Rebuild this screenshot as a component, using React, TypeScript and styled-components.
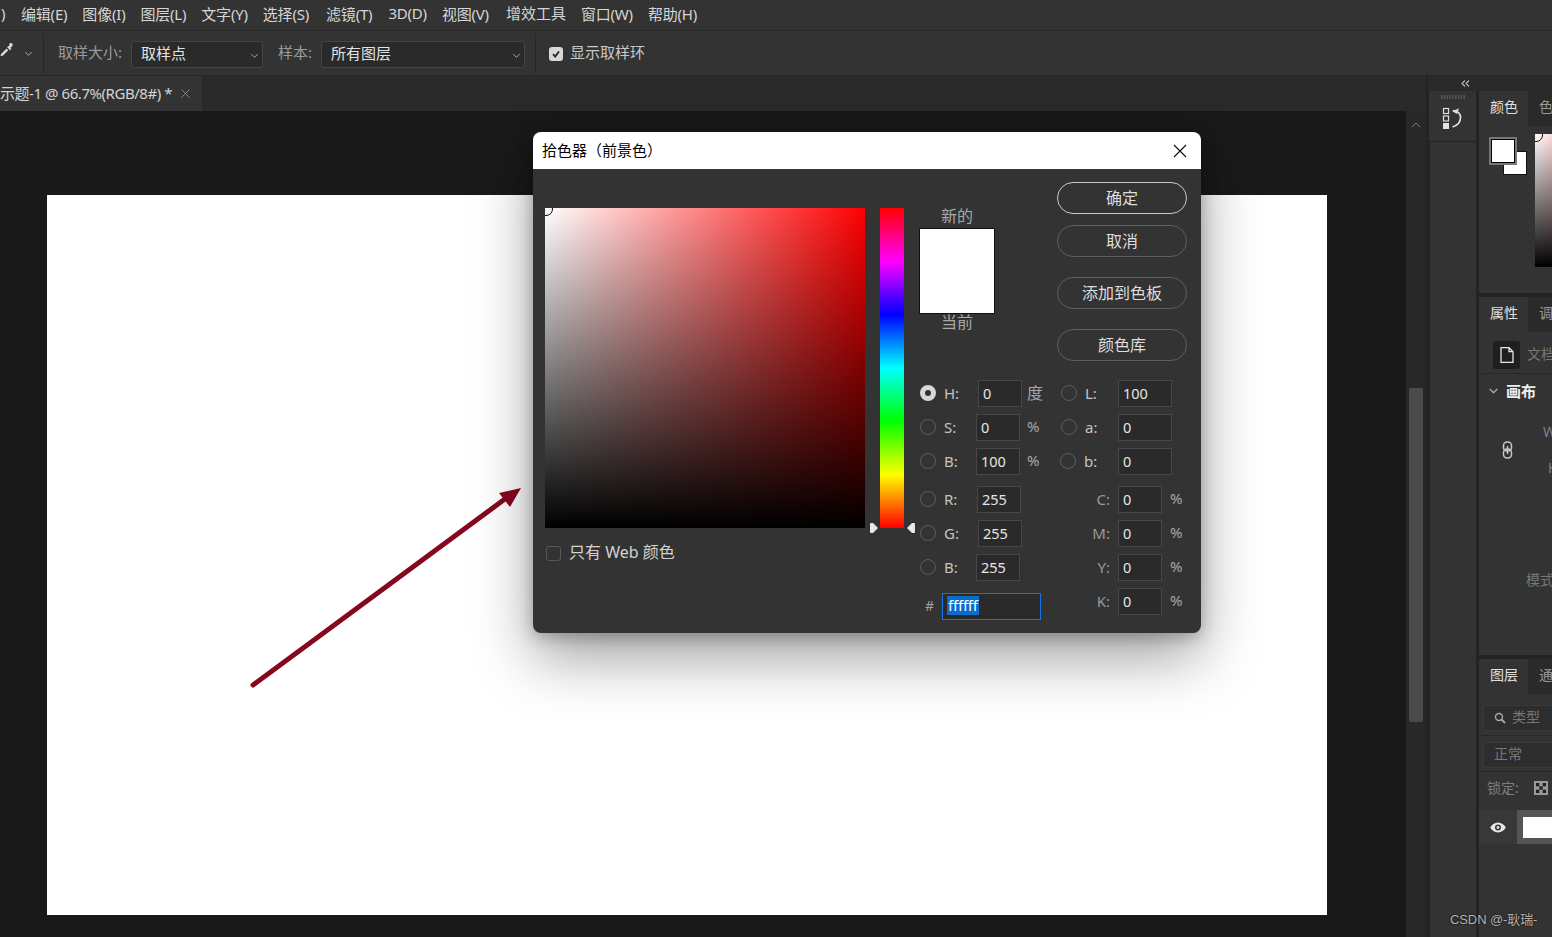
import React from "react";
import styled, { createGlobalStyle } from "styled-components";

const Global = createGlobalStyle`
  html, body { margin: 0; padding: 0; width: 1552px; height: 937px; overflow: hidden; background: #1a1a1a; }
  * { box-sizing: border-box; }
  body { font-family: "Noto Sans", "Noto Sans CJK SC", sans-serif; font-size: 14px; color: #d8d8d8; }
`;

const Page = styled.div`
  width: 1552px; height: 937px; display: flex; flex-direction: column; overflow: hidden; position: relative;
`;

/* Menu bar */
const MenuBar = styled.div`
  height: 31px; flex: none; display: flex; align-items: center; gap: 15px; background: #333;
  border-bottom: 1px solid #282828; white-space: nowrap; padding: 0 0 4px 1px; overflow: hidden;
`;
const MenuItem = styled.span<{ $big?: boolean; $extra?: number }>`
  font-size: 15px; color: #d6d6d6; letter-spacing: -0.2px; margin-left: ${p => p.$extra || 0}px;
  ${p => p.$big && "margin-top: -2px; letter-spacing: 0;"}
`;
const MenuLead = styled(MenuItem)`width: 5px;`;

/* Options bar */
const OptionsBar = styled.div`
  height: 45px; flex: none; display: flex; align-items: center; background: #333;
  border-bottom: 1px solid #282828; white-space: nowrap;
`;
const ToolSlot = styled.div`
  width: 44px; height: 41px; flex: none; display: flex; align-items: center; gap: 8px;
  border-right: 1px solid #282828; color: #ccc;
`;
const OptLabel = styled.span<{ $w: number; $x: number }>`
  width: ${p => p.$w}px; margin-left: ${p => p.$x}px; flex: none; color: #9a9a9a; font-size: 15px; margin-top: -3px;
`;
const SelectBox = styled.div<{ $w: number }>`
  width: ${p => p.$w}px; height: 27px; margin-top: 2px; flex: none; display: flex; align-items: center; justify-content: space-between;
  background: #2a2a2a; border: 1px solid #444; border-radius: 3px; padding: 0 3px 3px 9px; color: #e2e2e2; font-size: 15px;
`;
const ChevronSlot = styled.span`display: flex; margin-top: 5px;`;
const OptSep = styled.div`width: 1px; height: 41px; background: #282828; flex: none; margin-left: 10px;`;
const OptCheck = styled.div`
  width: 14px; height: 14px; flex: none; margin: 1px 7px 0 13px; background: #d8d8d8; border-radius: 3px;
  display: flex; align-items: center; justify-content: center;
`;
const OptText = styled.span`color: #c8c8c8; font-size: 15px; margin-top: -3px;`;

/* Main */
const Main = styled.div`flex: 1; display: flex; min-height: 0;`;
const DocArea = styled.div`width: 1428px; flex: none; display: flex; flex-direction: column; border-right: 2px solid #232323;`;
const TabRow = styled.div`height: 35px; flex: none; display: flex; background: #2a2a2a; overflow: hidden;`;
const DocTab = styled.div`
  width: 202px; display: flex; align-items: center; background: #333; white-space: nowrap; color: #d4d4d4;
  font-size: 15px; letter-spacing: -0.45px; padding-bottom: 2px; overflow: hidden;
`;
const TabClose = styled.span`margin-left: 9px; margin-top: 2px; display: flex; color: #8c8c8c;`;
const Workspace = styled.div`flex: 1; display: flex; min-height: 0;`;
const CanvasArea = styled.div`flex: 1; background: #191919; padding: 84px 0 0 47px;`;
const DocSheet = styled.div`width: 1280px; height: 720px; background: #fff; position: relative;`;
const ArrowLayer = styled.svg`position: absolute; left: 0; top: 0; width: 1280px; height: 720px;`;
const ScrollTrack = styled.div`width: 20px; flex: none; background: #282828; display: flex; flex-direction: column; align-items: center; padding-top: 11px;`;
const ScrollThumb = styled.div`width: 14px; height: 334px; margin-top: 260px; background: #4a4a4a; border-radius: 2px;`;

/* Dock */
const Dock = styled.div`flex: 1; display: flex; flex-direction: column; background: #232323; min-width: 0; overflow: hidden;`;
const DockTop = styled.div`height: 15px; flex: none; display: flex; justify-content: flex-end; align-items: center; padding-right: 82px; background: #2a2a2a;`;
const DockCols = styled.div`flex: 1; display: flex; gap: 3px; min-height: 0; padding-left: 1px;`;
const IconCol = styled.div`width: 47px; flex: none; display: flex; flex-direction: column; gap: 1px;`;
const IconPanel = styled.div`height: 50px; background: #333; display: flex; flex-direction: column; align-items: center; padding-top: 4px; gap: 8px;`;
const IconRest = styled.div`flex: 1; background: #333; margin-left: 1px;`;
const PanelCol = styled.div`flex: 1; display: flex; flex-direction: column; gap: 4px; min-width: 0; overflow: hidden;`;
const Panel = styled.div<{ $h?: number }>`
  ${p => (p.$h ? `height: ${p.$h}px; flex: none;` : "flex: 1;")} background: #333; overflow: hidden; white-space: nowrap;
`;
const PanelTabs = styled.div`height: 35px; display: flex; background: #2a2a2a;`;
const PanelTab = styled.div<{ $on?: boolean }>`
  width: ${p => (p.$on ? 49 : 40)}px; flex: none; padding: 0 0 5px 11px; display: flex; align-items: center;
  background: ${p => (p.$on ? "#333" : "#2a2a2a")}; color: ${p => (p.$on ? "#e0e0e0" : "#999")}; font-size: 14px;
`;

const ColorBody = styled.div`display: flex; padding: 8px 0 0 10px; gap: 7px;`;
const SwatchStack = styled.div`width: 39px; height: 42px; margin-top: 3px; position: relative; flex: none;`;
const FgSwatch = styled.div`
  position: absolute; left: 0; top: 0; width: 28px; height: 28px; background: #fff;
  border: 2px solid #777; box-shadow: inset 0 0 0 1px #000; z-index: 1;
`;
const BgSwatch = styled.div`position: absolute; left: 14px; top: 14px; width: 24px; height: 24px; background: #fff; border: 1px solid #111;`;
const MiniPicker = styled.div`
  width: 120px; height: 133px; flex: none; position: relative; overflow: hidden;
  background: linear-gradient(to bottom, transparent, #000), linear-gradient(to right, #fff, #f00);
`;
const PickerRing = styled.div`position: absolute; left: -6px; top: -6px; width: 14px; height: 14px; border-radius: 50%; border: 1px solid #000; box-shadow: inset 0 0 0 1px #fff;`;

const DocRow = styled.div`display: flex; align-items: center; gap: 7px; height: 42px; padding: 4px 0 0 14px; border-bottom: 1px solid #282828; color: #777;`;
const DocRowText = styled.span`margin-top: -3px;`;
const DocIconBox = styled.div`width: 27px; height: 28px; flex: none; background: #1f1f1f; border-radius: 3px; display: flex; align-items: center; justify-content: center;`;
const SectionHead = styled.div`display: flex; align-items: center; gap: 7px; padding: 6px 0 0 9px; font-weight: 700; color: #eee; font-size: 15px;`;
const SizeBlock = styled.div`display: flex; padding: 22px 0 0 23px; gap: 30px; height: 72px;`;
const ChainSlot = styled.div`padding-top: 18px;`;
const SizeLabels = styled.div`display: flex; flex-direction: column; gap: 18px; color: #7a8090; font-size: 14px;`;
const SizeLetter = styled.span<{ $in?: number }>`margin-left: ${p => p.$in || 0}px; line-height: 18px;`;
const ModeText = styled.div`padding: 96px 0 0 47px; color: #777;`;

const LayerBoxRow = styled.div<{ $top: number; $bottom: number }>`
  padding: ${p => p.$top}px 0 ${p => p.$bottom}px 4px; border-bottom: 1px solid #282828;
`;
const LayerBox = styled.div`
  height: 26px; width: 100px; display: flex; align-items: center; gap: 6px; background: #2d2d2d;
  border: 1px solid #3a3a3a; border-radius: 3px; padding: 0 0 5px 10px; color: #777;
`;
const LockRow = styled.div`display: flex; align-items: center; padding-left: 8px; height: 32px; color: #7e7e7e; gap: 15px;`;
const LockText = styled.span`margin-top: -2px;`;
const LayerRow = styled.div`display: flex; margin-top: 6px; height: 34px; background: #383838; padding-left: 11px; align-items: center; gap: 11px;`;
const LayerThumb = styled.div`height: 34px; width: 60px; flex: none; background: #555; padding: 7px 0 6px 6px;`;
const LayerWhite = styled.div`height: 100%; background: #fff;`;

/* Dialog */
const Dialog = styled.div`
  position: absolute; left: 533px; top: 132px; width: 668px; height: 501px; background: #333; border-radius: 8px;
  overflow: hidden; box-shadow: 0 24px 60px rgba(0,0,0,.38), 0 4px 16px rgba(0,0,0,.25); z-index: 5;
`;
const TitleBar = styled.div`
  height: 37px; background: #fff; color: #000; display: flex; align-items: center; justify-content: space-between;
  padding: 0 14px 2px 9px; font-size: 15px;
`;
const DialogBody = styled.div`display: flex; padding: 39px 14px 0 12px; gap: 15px;`;
const PickerCol = styled.div`width: 320px; flex: none;`;
const PickerField = styled.div`
  width: 320px; height: 320px; position: relative; overflow: hidden;
  background: linear-gradient(to bottom, transparent, #000), linear-gradient(to right, #fff, #f00);
`;
const WebRow = styled.label`display: flex; align-items: center; gap: 8px; margin-top: 11px; margin-left: 1px; color: #d2d2d2; font-size: 16px;`;
const WebBox = styled.span`width: 15px; height: 15px; margin-top: 4px; border: 1.5px solid #585858; border-radius: 3px; flex: none;`;
const HueCol = styled.div`width: 24px; height: 320px; flex: none; position: relative;`;
const HueBar = styled.div`
  width: 24px; height: 320px;
  background: linear-gradient(to bottom, #f00 0%, #f0f 16.67%, #00f 33.33%, #0ff 50%, #0f0 66.67%, #ff0 83.33%, #f00 100%);
`;
const HueMark = styled.svg<{ $side: "l" | "r" }>`
  position: absolute; top: 315px; ${p => (p.$side === "l" ? "left: -10px;" : "right: -11px;")} width: 8px; height: 10px;
`;
const RightCol = styled.div`flex: 1; margin-top: -26px; min-width: 0;`;
const TopBlock = styled.div`display: flex; height: 198px;`;
const SwatchCol = styled.div`width: 76px; flex: none; padding-top: 23px; display: flex; flex-direction: column; align-items: center; color: #a8a8a8; font-size: 16px; line-height: 22px;`;
const Preview = styled.div`width: 76px; height: 86px; flex: none; background: #fff; border: 1px solid #111; margin: 1px 0 -3px;`;
const ButtonCol = styled.div`margin-left: 62px; width: 130px; flex: none; display: flex; flex-direction: column;`;
const PillButton = styled.button<{ $primary?: boolean; $gap: number }>`
  width: 130px; height: 32px; margin-top: ${p => p.$gap}px; border-radius: 16px; background: transparent; padding: 0 0 2px;
  border: ${p => (p.$primary ? "1.5px solid #c8c8c8" : "1.5px solid #5e5e5e")}; color: #dedede; font: 16px "Noto Sans CJK SC", sans-serif;
`;
const FieldGrid = styled.div`display: flex;`;
const FieldCol = styled.div<{ $w: number; $x?: number }>`
  width: ${p => p.$w}px; margin-left: ${p => p.$x || 0}px; flex: none; display: flex; flex-direction: column;
`;
const FieldRow = styled.div<{ $top?: number; $x?: number }>`
  height: 27px; margin-top: ${p => p.$top ?? 7}px; margin-left: ${p => p.$x || 0}px; display: flex; align-items: center;
  color: #c4c4c4; font-size: 15px;
`;
const Radio = styled.span<{ $on?: boolean }>`
  width: 16px; height: 16px; flex: none; border-radius: 50%; margin-right: 8px; margin-top: -1px;
  border: ${p => (p.$on ? "5px solid #d8d8d8" : "1px solid #5c5c5c")}; background: #333;
`;
const FieldLabel = styled.span<{ $w: number; $right?: boolean }>`
  width: ${p => p.$w}px; flex: none; margin-top: -2px; ${p => p.$right && "text-align: right; padding-right: 8px; color: #999;"}
`;
const ValueBox = styled.div<{ $w?: number }>`
  width: ${p => p.$w ?? 44}px; height: 27px; flex: none; background: #2a2a2a; border: 1px solid #474747;
  display: flex; align-items: center; padding: 0 0 2px 4px; color: #e6e6e6; font-size: 14.5px;
`;
const Unit = styled.span<{ $x?: number; $big?: boolean }>`
  margin-left: ${p => p.$x ?? 7}px; margin-top: -3px; color: #a8a8a8; font-size: ${p => (p.$big ? 16 : 15)}px;
`;
const HashLabel = styled.span`width: 22px; flex: none; padding-left: 5px; color: #a0a0a0; font-size: 14px; margin-top: -2px;`;
const HexBox = styled(ValueBox)`width: 99px; border-color: #1473e6;`;
const HexSelected = styled.span`background: #0a6ccc; color: #fff; padding: 0 1px; line-height: 19px; font-size: 15px; letter-spacing: -0.2px;`;
const Watermark = styled.div`
  position: absolute; left: 1450px; top: 909px; color: #b4b4b4; font: 13px "Liberation Sans", "Noto Sans CJK SC", sans-serif; z-index: 6;
  letter-spacing: -0.1px; text-shadow: 0 0 2px #000;
`;

const Chevron = ({ c = "#aaa", s = 9 }: { c?: string; s?: number }) => (
  <svg width={s} height={s} viewBox="0 0 10 10"><path d="M1.5 3.5 5 7l3.5-3.5" fill="none" stroke={c} strokeWidth="1.1" /></svg>
);

const menuItems: { t: string; extra?: number; big?: boolean }[] = [
  { t: "编辑(E)" }, { t: "图像(I)" }, { t: "图层(L)" }, { t: "文字(Y)" }, { t: "选择(S)" },
  { t: "滤镜(T)", extra: 2 }, { t: "3D(D)", extra: 1 }, { t: "视图(V)" },
  { t: "增效工具", extra: 2, big: true }, { t: "窗口(W)" }, { t: "帮助(H)" },
];

type F = { l: string; v: string; w: number; top?: number; x?: number; on?: boolean; u?: string; ux?: number; bw?: number };
const leftFields: F[] = [
  { l: "H:", v: "0", w: 34, top: 0, on: true, u: "度", ux: 5 },
  { l: "S:", v: "0", w: 32, u: "%" },
  { l: "B:", v: "100", w: 32, u: "%", ux: 7 },
  { l: "R:", v: "255", w: 33, top: 11 },
  { l: "G:", v: "255", w: 34 },
  { l: "B:", v: "255", w: 32 },
];
const labFields: F[] = [
  { l: "L:", v: "100", w: 33, top: 0, x: 1, bw: 54 },
  { l: "a:", v: "0", w: 33, x: 1, bw: 54 },
  { l: "b:", v: "0", w: 34, bw: 54 },
];
const cmyk = [
  { l: "C:", top: 11 }, { l: "M:", top: 7 }, { l: "Y:", top: 7 }, { l: "K:", top: 7 },
];

export default function App() {
  return (
    <Page>
      <Global />
      <MenuBar>
        <MenuLead>)</MenuLead>
        {menuItems.map(m => <MenuItem key={m.t} $big={m.big} $extra={m.extra}>{m.t}</MenuItem>)}
      </MenuBar>
      <OptionsBar>
        <ToolSlot>
          <svg width="14" height="17" viewBox="0 0 14 17" style={{ marginTop: -6 }}>
            <path d="M9.5 1.5c1-1 2.6-.6 3 .5.4 1 .1 1.900-.6 2.600L10.500 6l.9.900-1.300 1.300-3-3 1.300-1.300.6.600zM6.500 6.500l1.800 1.800-5.500 5.500-2.300.5.500-2.300z" fill="#d8d8d8" />
          </svg>
          <span style={{ display: "flex", marginLeft: 2 }}><Chevron /></span>
        </ToolSlot>
        <OptLabel $w={73} $x={14}>取样大小:</OptLabel>
        <SelectBox $w={132}>取样点<ChevronSlot><Chevron /></ChevronSlot></SelectBox>
        <OptLabel $w={43} $x={15}>样本:</OptLabel>
        <SelectBox $w={204}>所有图层<ChevronSlot><Chevron /></ChevronSlot></SelectBox>
        <OptSep />
        <OptCheck>
          <svg width="10" height="10" viewBox="0 0 10 10"><path d="M2 5.200 4.200 7.500 8 2.500" fill="none" stroke="#222" strokeWidth="1.800" /></svg>
        </OptCheck>
        <OptText>显示取样环</OptText>
      </OptionsBar>
      <Main>
        <DocArea>
          <TabRow>
            <DocTab>
              示题-1 @ 66.7%(RGB/8#) *
              <TabClose>
                <svg width="9" height="9" viewBox="0 0 9 9"><path d="M.5.500l8 8M8.500.500l-8 8" stroke="currentColor" strokeWidth=".9" /></svg>
              </TabClose>
            </DocTab>
          </TabRow>
          <Workspace>
            <CanvasArea>
              <DocSheet>
                <ArrowLayer viewBox="0 0 1280 720">
                  <path d="M206 490 462 301" stroke="#85081f" strokeWidth="5" strokeLinecap="round" fill="none" />
                  <path d="M474 293 452 298 463 312z" fill="#85081f" />
                </ArrowLayer>
              </DocSheet>
            </CanvasArea>
            <ScrollTrack>
              <svg width="10" height="6" viewBox="0 0 10 6"><path d="M1 5l4-4 4 4" fill="none" stroke="#777" strokeWidth="1" /></svg>
              <ScrollThumb />
            </ScrollTrack>
          </Workspace>
        </DocArea>
        <Dock>
          <DockTop>
            <svg width="9" height="7" viewBox="0 0 9 7"><path d="M4 .5 1 3.500l3 3M8 .5 5 3.500l3 3" fill="none" stroke="#bbb" strokeWidth="1.100" /></svg>
          </DockTop>
          <DockCols>
            <IconCol>
              <IconPanel>
                <svg width="24" height="4" viewBox="0 0 24 4">
                  {Array.from({ length: 9 }).map((_, i) => <rect key={i} x={i * 2.8} width="1.500" height="4" fill="#555" />)}
                </svg>
                <svg width="21" height="23" viewBox="0 0 21 23">
                  <rect x="1.500" y="1.500" width="5" height="5" fill="none" stroke="#ddd" strokeWidth="1.200" />
                  <rect x="1.500" y="9" width="5" height="5" fill="none" stroke="#ddd" strokeWidth="1.200" />
                  <rect x="1" y="16" width="6" height="6" fill="#e4e4e4" />
                  <path d="M11 3.500c4.500.5 7.500 2.500 7.500 7 0 4.500-3 8-8 9.500" fill="none" stroke="#ddd" strokeWidth="1.700" />
                  <path d="M10 4 17 1.500l-2 5.500z" fill="#ddd" />
                </svg>
              </IconPanel>
              <IconRest />
            </IconCol>
            <PanelCol>
              <Panel $h={202}>
                <PanelTabs>
                  <PanelTab $on>颜色</PanelTab>
                  <PanelTab>色板</PanelTab>
                </PanelTabs>
                <ColorBody>
                  <SwatchStack>
                    <BgSwatch />
                    <FgSwatch />
                  </SwatchStack>
                  <MiniPicker><PickerRing /></MiniPicker>
                </ColorBody>
              </Panel>
              <Panel $h={358}>
                <PanelTabs>
                  <PanelTab $on>属性</PanelTab>
                  <PanelTab>调整</PanelTab>
                </PanelTabs>
                <DocRow>
                  <DocIconBox>
                    <svg width="14" height="16" viewBox="0 0 14 16"><path d="M1 .7h8l4 4v10.600H1zM9 .7v4h4" fill="none" stroke="#e6e6e6" strokeWidth="1.300" /></svg>
                  </DocIconBox>
                  <DocRowText>文档属性</DocRowText>
                </DocRow>
                <SectionHead>
                  <Chevron c="#bbb" s={11} />
                  画布
                </SectionHead>
                <SizeBlock>
                  <ChainSlot>
                    <svg width="11" height="18" viewBox="0 0 11 18">
                      <rect x="1.500" y="1" width="8" height="9" rx="3.500" fill="none" stroke="#c8c8c8" strokeWidth="1.500" />
                      <rect x="1.500" y="8" width="8" height="9" rx="3.500" fill="none" stroke="#c8c8c8" strokeWidth="1.500" />
                      <path d="M5.500 5v8" stroke="#c8c8c8" strokeWidth="1.500" />
                    </svg>
                  </ChainSlot>
                  <SizeLabels>
                    <SizeLetter>W</SizeLetter>
                    <SizeLetter $in={5}>H</SizeLetter>
                  </SizeLabels>
                </SizeBlock>
                <ModeText>模式</ModeText>
              </Panel>
              <Panel>
                <PanelTabs>
                  <PanelTab $on>图层</PanelTab>
                  <PanelTab>通道</PanelTab>
                </PanelTabs>
                <LayerBoxRow $top={11} $bottom={4}>
                  <LayerBox>
                    <svg width="12" height="12" viewBox="0 0 12 12" style={{ flex: "none", marginTop: 5 }}>
                      <circle cx="5" cy="5" r="3.500" fill="none" stroke="#aaa" strokeWidth="1.400" />
                      <path d="M7.500 7.500 11 11" stroke="#aaa" strokeWidth="1.800" />
                    </svg>
                    类型
                  </LayerBox>
                </LayerBoxRow>
                <LayerBoxRow $top={6} $bottom={3}>
                  <LayerBox>正常</LayerBox>
                </LayerBoxRow>
                <LockRow>
                  <LockText>锁定:</LockText>
                  <svg width="14" height="14" viewBox="0 0 14 14" style={{ flex: "none" }}>
                    <rect width="14" height="14" fill="#999" />
                    <rect x="2" y="2" width="3.300" height="3.300" fill="#222" /><rect x="8.700" y="2" width="3.300" height="3.300" fill="#222" />
                    <rect x="5.300" y="5.300" width="3.400" height="3.400" fill="#222" />
                    <rect x="2" y="8.700" width="3.300" height="3.300" fill="#222" /><rect x="8.700" y="8.700" width="3.300" height="3.300" fill="#222" />
                  </svg>
                </LockRow>
                <LayerRow>
                  <svg width="16" height="11" viewBox="0 0 16 11" style={{ flex: "none" }}>
                    <path fillRule="evenodd" d="M8 .5c3.500 0 6.200 2.400 7.800 5-1.600 2.600-4.300 5-7.800 5s-6.200-2.400-7.800-5C1.800 2.900 4.500.5 8 .5zM8 2.500a3 3 0 1 0 0 6 3 3 0 0 0 0-6z" fill="#e8e8e8" />
                    <circle cx="8" cy="5.500" r="1.400" fill="#e8e8e8" />
                  </svg>
                  <LayerThumb><LayerWhite /></LayerThumb>
                </LayerRow>
              </Panel>
            </PanelCol>
          </DockCols>
        </Dock>
      </Main>

      <Dialog>
        <TitleBar>
          拾色器（前景色）
          <svg width="14" height="14" viewBox="0 0 14 14" style={{ marginTop: 2 }}><path d="M1 1l12 12M13 1 1 13" stroke="#111" strokeWidth="1.200" /></svg>
        </TitleBar>
        <DialogBody>
          <PickerCol>
            <PickerField><PickerRing /></PickerField>
            <WebRow>
              <WebBox />
              只有 Web 颜色
            </WebRow>
          </PickerCol>
          <HueCol>
            <HueBar />
            <HueMark $side="l" viewBox="0 0 8 10"><path d="M1 0h2l5 5-5 5H1a1 1 0 0 1-1-1V1a1 1 0 0 1 1-1z" fill="#e8e8e8" /></HueMark>
            <HueMark $side="r" viewBox="0 0 8 10"><path d="M7 0H5L0 5l5 5h2a1 1 0 0 0 1-1V1a1 1 0 0 0-1-1z" fill="#e8e8e8" /></HueMark>
          </HueCol>
          <RightCol>
            <TopBlock>
              <SwatchCol>
                新的
                <Preview />
                当前
              </SwatchCol>
              <ButtonCol>
                <PillButton $primary $gap={0}>确定</PillButton>
                <PillButton $gap={11}>取消</PillButton>
                <PillButton $gap={20}>添加到色板</PillButton>
                <PillButton $gap={20}>颜色库</PillButton>
              </ButtonCol>
            </TopBlock>
            <FieldGrid>
              <FieldCol $w={140} $x={1}>
                {leftFields.map((f, i) => (
                  <FieldRow key={i} $top={f.top}>
                    <Radio $on={f.on} />
                    <FieldLabel $w={f.w}>{f.l}</FieldLabel>
                    <ValueBox>{f.v}</ValueBox>
                    {f.u && <Unit $x={f.ux} $big={f.u === "度"}>{f.u}</Unit>}
                  </FieldRow>
                ))}
                <FieldRow $top={12}>
                  <HashLabel>#</HashLabel>
                  <HexBox><HexSelected>ffffff</HexSelected></HexBox>
                </FieldRow>
              </FieldCol>
              <FieldCol $w={120}>
                {labFields.map((f, i) => (
                  <FieldRow key={i} $top={f.top} $x={f.x}>
                    <Radio />
                    <FieldLabel $w={f.w}>{f.l}</FieldLabel>
                    <ValueBox $w={f.bw}>{f.v}</ValueBox>
                  </FieldRow>
                ))}
                {cmyk.map(c => (
                  <FieldRow key={c.l} $top={c.top}>
                    <FieldLabel $w={58} $right>{c.l}</FieldLabel>
                    <ValueBox>0</ValueBox>
                    <Unit $x={8}>%</Unit>
                  </FieldRow>
                ))}
              </FieldCol>
            </FieldGrid>
          </RightCol>
        </DialogBody>
      </Dialog>
      <Watermark>CSDN @-耿瑞-</Watermark>
    </Page>
  );
}
